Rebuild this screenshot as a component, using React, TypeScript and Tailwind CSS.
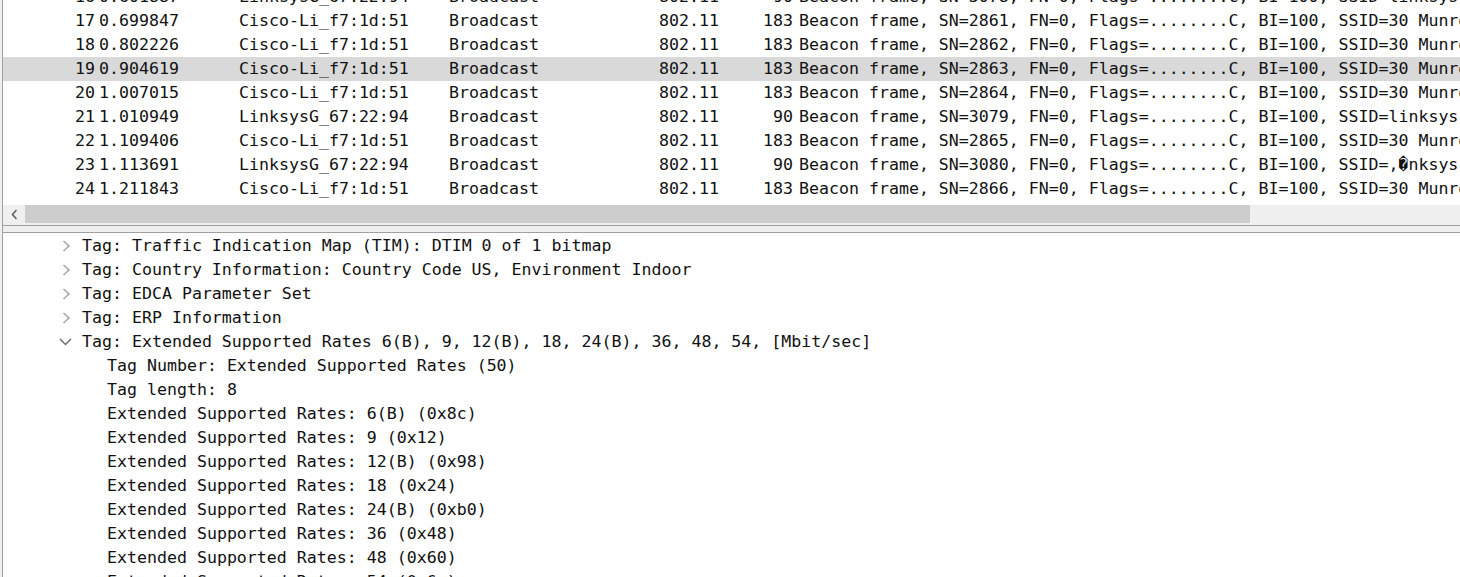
type Packet = {
  no: number;
  time: string;
  src: string;
  dst: string;
  proto: string;
  len: number;
  info: string;
};

const packets: Packet[] = [
  { no: 16, time: '0.601887', src: 'LinksysG_67:22:94', dst: 'Broadcast', proto: '802.11', len: 90, info: 'Beacon frame, SN=3078, FN=0, Flags=........C, BI=100, SSID=linksys' },
  { no: 17, time: '0.699847', src: 'Cisco-Li_f7:1d:51', dst: 'Broadcast', proto: '802.11', len: 183, info: 'Beacon frame, SN=2861, FN=0, Flags=........C, BI=100, SSID=30 Munroe' },
  { no: 18, time: '0.802226', src: 'Cisco-Li_f7:1d:51', dst: 'Broadcast', proto: '802.11', len: 183, info: 'Beacon frame, SN=2862, FN=0, Flags=........C, BI=100, SSID=30 Munroe' },
  { no: 19, time: '0.904619', src: 'Cisco-Li_f7:1d:51', dst: 'Broadcast', proto: '802.11', len: 183, info: 'Beacon frame, SN=2863, FN=0, Flags=........C, BI=100, SSID=30 Munroe' },
  { no: 20, time: '1.007015', src: 'Cisco-Li_f7:1d:51', dst: 'Broadcast', proto: '802.11', len: 183, info: 'Beacon frame, SN=2864, FN=0, Flags=........C, BI=100, SSID=30 Munroe' },
  { no: 21, time: '1.010949', src: 'LinksysG_67:22:94', dst: 'Broadcast', proto: '802.11', len: 90, info: 'Beacon frame, SN=3079, FN=0, Flags=........C, BI=100, SSID=linksys' },
  { no: 22, time: '1.109406', src: 'Cisco-Li_f7:1d:51', dst: 'Broadcast', proto: '802.11', len: 183, info: 'Beacon frame, SN=2865, FN=0, Flags=........C, BI=100, SSID=30 Munroe' },
  { no: 23, time: '1.113691', src: 'LinksysG_67:22:94', dst: 'Broadcast', proto: '802.11', len: 90, info: 'Beacon frame, SN=3080, FN=0, Flags=........C, BI=100, SSID=,\uFFFDnksys' },
  { no: 24, time: '1.211843', src: 'Cisco-Li_f7:1d:51', dst: 'Broadcast', proto: '802.11', len: 183, info: 'Beacon frame, SN=2866, FN=0, Flags=........C, BI=100, SSID=30 Munroe' },
];

type Node = { text: string; level: 0 | 1; state?: 'open' | 'closed' };

const tree: Node[] = [
  { text: 'Tag: Traffic Indication Map (TIM): DTIM 0 of 1 bitmap', level: 0, state: 'closed' },
  { text: 'Tag: Country Information: Country Code US, Environment Indoor', level: 0, state: 'closed' },
  { text: 'Tag: EDCA Parameter Set', level: 0, state: 'closed' },
  { text: 'Tag: ERP Information', level: 0, state: 'closed' },
  { text: 'Tag: Extended Supported Rates 6(B), 9, 12(B), 18, 24(B), 36, 48, 54, [Mbit/sec]', level: 0, state: 'open' },
  { text: 'Tag Number: Extended Supported Rates (50)', level: 1 },
  { text: 'Tag length: 8', level: 1 },
  { text: 'Extended Supported Rates: 6(B) (0x8c)', level: 1 },
  { text: 'Extended Supported Rates: 9 (0x12)', level: 1 },
  { text: 'Extended Supported Rates: 12(B) (0x98)', level: 1 },
  { text: 'Extended Supported Rates: 18 (0x24)', level: 1 },
  { text: 'Extended Supported Rates: 24(B) (0xb0)', level: 1 },
  { text: 'Extended Supported Rates: 36 (0x48)', level: 1 },
  { text: 'Extended Supported Rates: 48 (0x60)', level: 1 },
  { text: 'Extended Supported Rates: 54 (0x6c)', level: 1 },
];

const Chevron = ({ open }: { open?: boolean }) =>
  open ? (
    <svg width="13" height="8" viewBox="0 0 13 8" className="block">
      <polyline points="1,1 6.5,6.5 12,1" fill="none" stroke="#6e6e6e" strokeWidth="1.5" />
    </svg>
  ) : (
    <svg width="9" height="12" viewBox="0 0 9 12" className="block">
      <polyline points="1.5,1 7,6 1.5,11" fill="none" stroke="#a6a6a6" strokeWidth="1.6" />
    </svg>
  );

export default function App() {
  return (
    <div className="flex h-[577px] w-[1460px] overflow-hidden bg-[#f0f0f0] pl-[2px] font-['DejaVu_Sans_Mono',monospace] text-[16.6px] text-[#111]">
      <div className="flex min-w-0 flex-1 flex-col border-l border-[#a0a0a0] bg-white">
        {/* packet list */}
        <div className="h-[205px] overflow-hidden">
          <div className="mt-[-15px]">
            {packets.map((p) => (
              <div
                key={p.no}
                className={`flex h-[24px] items-center whitespace-nowrap leading-[24px] ${p.no === 19 ? 'bg-[#d9d9d9]' : ''}`}
              >
                <div className="w-[96px] shrink-0 pr-[4px] text-right">{p.no}</div>
                <div className="w-[140px] shrink-0">{p.time}</div>
                <div className="w-[210px] shrink-0">{p.src}</div>
                <div className="w-[210px] shrink-0">{p.dst}</div>
                <div className="w-[80px] shrink-0">{p.proto}</div>
                <div className="w-[60px] shrink-0 pr-[6px] text-right">{p.len}</div>
                <div className="shrink-0">{p.info}</div>
              </div>
            ))}
          </div>
        </div>

        {/* horizontal scrollbar */}
        <div className="flex h-[20px] items-start bg-[#f0f0f0]">
          <div className="flex h-[18px] w-[22px] shrink-0 items-center justify-center">
            <svg width="7" height="11" viewBox="0 0 7 11">
              <polyline points="5.5,1 1.5,5.5 5.5,10" fill="none" stroke="#606060" strokeWidth="1.6" />
            </svg>
          </div>
          <div className="h-[18px] w-[1225px] bg-[#cdcdcd]" />
        </div>
        <div className="h-px bg-[#a0a0a0]" />
        <div className="h-[6px] bg-[#f0f0f0]" />
        <div className="h-px bg-[#a0a0a0]" />

        {/* packet details */}
        <div className="flex-1 overflow-hidden pt-px">
          {tree.map((n, i) => (
            <div key={i} className="flex h-[24px] items-center whitespace-nowrap leading-[24px]">
              {n.level === 0 ? (
                <>
                  <div className={`flex w-[79px] shrink-0 justify-end ${n.state === 'open' ? 'pr-[10px]' : 'pr-[11px]'}`}>
                    <Chevron open={n.state === 'open'} />
                  </div>
                  <span>{n.text}</span>
                </>
              ) : (
                <>
                  <div className="w-[104px] shrink-0" />
                  <span>{n.text}</span>
                </>
              )}
            </div>
          ))}
        </div>
      </div>
    </div>
  );
}
